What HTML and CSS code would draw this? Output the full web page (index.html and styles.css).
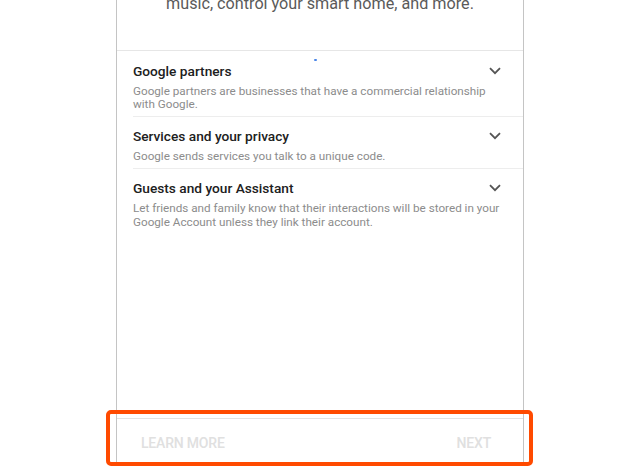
FILE: index.html
```html
<!DOCTYPE html>
<html lang="en">
<head>
<meta charset="utf-8">
<title>Assistant setup</title>
<link rel="stylesheet" href="styles.css">
</head>
<body>
<div class="panel">
  <div class="intro">
    <p class="intro-text">music, control your smart home, and more.</p>
  </div>
  <span class="loader-dot"></span>
  <ul class="list">
    <li class="item">
      <div class="item-head">
        <span class="item-title">Google partners</span>
        <svg class="chev" width="12" height="8" viewBox="0 0 12 8"><path d="M1 1.2 L6 6.2 L11 1.2" fill="none" stroke="#555" stroke-width="1.8"/></svg>
      </div>
      <p class="item-desc">Google partners are businesses that have a commercial relationship with Google.</p>
    </li>
    <li class="item">
      <div class="item-head">
        <span class="item-title">Services and your privacy</span>
        <svg class="chev" width="12" height="8" viewBox="0 0 12 8"><path d="M1 1.2 L6 6.2 L11 1.2" fill="none" stroke="#555" stroke-width="1.8"/></svg>
      </div>
      <p class="item-desc">Google sends services you talk to a unique code.</p>
    </li>
    <li class="item last">
      <div class="item-head">
        <span class="item-title">Guests and your Assistant</span>
        <svg class="chev" width="12" height="8" viewBox="0 0 12 8"><path d="M1 1.2 L6 6.2 L11 1.2" fill="none" stroke="#555" stroke-width="1.8"/></svg>
      </div>
      <p class="item-desc">Let friends and family know that their interactions will be stored in your Google Account unless they link their account.</p>
    </li>
  </ul>
  <div class="footer">
    <span class="btn">LEARN MORE</span>
    <span class="btn">NEXT</span>
  </div>
</div>
<div class="highlight"></div>
</body>
</html>
```

FILE: styles.css
```css
html, body {
  margin: 0;
  padding: 0;
  background: #ffffff;
  height: 100%;
  overflow: hidden;
}
body {
  font-family: Roboto, "Liberation Sans", sans-serif;
  position: relative;
}
.panel {
  position: relative;
  margin-left: 116px;
  width: 408px;
  height: 466px;
  box-sizing: border-box;
  border-left: 1px solid #c4c4c4;
  border-right: 1px solid #c4c4c4;
  display: flex;
  flex-direction: column;
}
.intro {
  height: 50px;
  border-bottom: 1px solid #e6e6e6;
  flex: none;
}
.intro-text {
  margin: -6px 0 0 0;
  text-align: center;
  font-size: 16.2px;
  line-height: 20px;
  color: #5a5a5a;
  padding-left: 0;
}
.loader-dot {
  position: absolute;
  left: 197px;
  top: 59px;
  width: 3px;
  height: 2px;
  background: #4a86e8;
  border-radius: 1px;
}
.list {
  list-style: none;
  margin: 0;
  padding: 0;
  flex: 1;
}
.item {
  margin-left: 16px;
  padding: 9.5px 0 4px 0;
  border-bottom: 1px solid #ededed;
}
.item.last {
  border-bottom: none;
}
.item-head {
  display: flex;
  align-items: center;
  justify-content: space-between;
  height: 20px;
  padding-right: 22px;
}
.item-title {
  font-size: 13.7px;
  font-weight: 500;
  color: #202020;
}
.chev {
  display: block;
}
.item-desc {
  margin: 4px 0 0 0;
  font-size: 11.7px;
  line-height: 13.5px;
  color: #8c8c8c;
  padding-right: 18px;
}
.footer {
  flex: none;
  height: 47px;
  border-top: 1px solid #e3e3e3;
  display: flex;
  align-items: center;
  justify-content: space-between;
  padding: 0 32px 0 24px;
}
.btn {
  font-size: 14px;
  font-weight: 500;
  color: #e0e0e0;
  letter-spacing: -0.2px;
}
.highlight {
  position: absolute;
  left: 106px;
  top: 410px;
  width: 427px;
  height: 56px;
  box-sizing: border-box;
  border: 4px solid #ff4a00;
  border-radius: 5px;
}
```
